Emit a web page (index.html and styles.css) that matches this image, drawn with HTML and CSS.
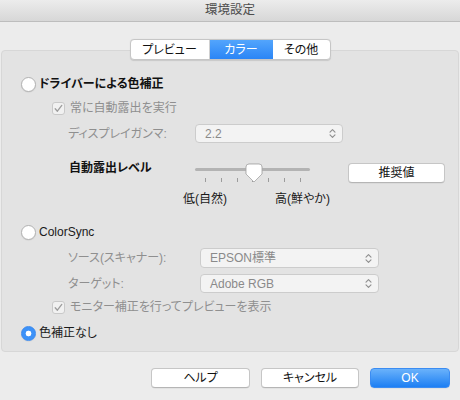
FILE: index.html
```html
<!DOCTYPE html>
<html lang="ja">
<head>
<meta charset="utf-8">
<title>環境設定</title>
<link rel="stylesheet" href="styles.css">
</head>
<body>
<header class="titlebar">環境設定</header>
<main class="content">
  <nav class="tabs">
    <span class="tab tab-preview">プレビュー</span>
    <span class="tab tab-color active">カラー</span>
    <span class="tab tab-other">その他</span>
  </nav>
  <section class="group">
    <div class="row r1">
      <span class="radio"></span><span class="radio-label strong">ドライバーによる色補正</span>
    </div>
    <div class="row r2 check-row">
      <span class="check"><svg viewBox="0 0 13 13" width="13" height="13"><path d="M3.2 6.8 L5.4 9.2 L9.8 3.4" fill="none" stroke="#9d9d9d" stroke-width="1.3" stroke-linecap="round" stroke-linejoin="round"/></svg></span>
      <span class="dim">常に自動露出を実行</span>
    </div>
    <div class="row r3 field-row">
      <span class="field-label dim gamma-label">ディスプレイガンマ:</span>
      <span class="popup gamma-popup"><span>2.2</span><svg class="arrows" viewBox="0 0 7 11" width="7" height="11"><path d="M1 4.2 L3.5 1.6 L6 4.2 M1 6.8 L3.5 9.4 L6 6.8" fill="none" stroke="#8e8e8e" stroke-width="1.1" stroke-linecap="round" stroke-linejoin="round"/></svg></span>
    </div>
    <div class="row r4 slider-row">
      <span class="field-label strong level-label">自動露出レベル</span>
      <div class="slider">
        <span class="track"></span>
        <span class="ticks"><i></i><i></i><i></i><i></i><i></i><i></i><i></i></span>
        <svg class="thumb" viewBox="0 0 18 20" width="18" height="20"><path d="M1 4 A3 3 0 0 1 4 1 H14 A3 3 0 0 1 17 4 V11 L9 19 L1 11 Z" fill="#ffffff" stroke="#b4b4b4" stroke-width="1"/></svg>
      </div>
      <span class="button recommend">推奨値</span>
    </div>
    <div class="row r5 scale-row">
      <span class="scale-low">低(自然)</span><span class="scale-high">高(鮮やか)</span>
    </div>
    <div class="row r6">
      <span class="radio"></span><span class="radio-label">ColorSync</span>
    </div>
    <div class="row r7 field-row">
      <span class="field-label dim sync-label">ソース(スキャナー):</span>
      <span class="popup sync-popup"><span>EPSON標準</span><svg class="arrows" viewBox="0 0 7 11" width="7" height="11"><path d="M1 4.2 L3.5 1.6 L6 4.2 M1 6.8 L3.5 9.4 L6 6.8" fill="none" stroke="#8e8e8e" stroke-width="1.1" stroke-linecap="round" stroke-linejoin="round"/></svg></span>
    </div>
    <div class="row r8 field-row">
      <span class="field-label dim sync-label">ターゲット:</span>
      <span class="popup sync-popup"><span>Adobe RGB</span><svg class="arrows" viewBox="0 0 7 11" width="7" height="11"><path d="M1 4.2 L3.5 1.6 L6 4.2 M1 6.8 L3.5 9.4 L6 6.8" fill="none" stroke="#8e8e8e" stroke-width="1.1" stroke-linecap="round" stroke-linejoin="round"/></svg></span>
    </div>
    <div class="row r9 check-row">
      <span class="check"><svg viewBox="0 0 13 13" width="13" height="13"><path d="M3.2 6.8 L5.4 9.2 L9.8 3.4" fill="none" stroke="#9d9d9d" stroke-width="1.3" stroke-linecap="round" stroke-linejoin="round"/></svg></span>
      <span class="dim">モニター補正を行ってプレビューを表示</span>
    </div>
    <div class="row r10">
      <span class="radio selected"></span><span class="radio-label">色補正なし</span>
    </div>
  </section>
  <footer class="buttons">
    <span class="button help">ヘルプ</span>
    <span class="button cancel">キャンセル</span>
    <span class="button ok">OK</span>
  </footer>
</main>
</body>
</html>
```

FILE: styles.css
```css
* { box-sizing: border-box; }
html, body { margin: 0; padding: 0; }
body {
  width: 460px;
  height: 400px;
  overflow: hidden;
  background: #ececec;
  font-family: "Liberation Sans", "Noto Sans CJK JP", sans-serif;
  font-size: 12px;
  line-height: 16px;
  color: #1a1a1a;
  font-feature-settings: "palt";
}

.titlebar {
  height: 22px;
  border-bottom: 1px solid #bdbdbd;
  background: linear-gradient(#ececec, #d7d7d7);
  text-align: center;
  line-height: 21px;
  font-size: 12.5px;
  color: #4d4d4d;
}

.content { padding: 17px 1px 0; }

.tabs {
  position: relative;
  z-index: 1;
  display: flex;
  width: 201px;
  height: 21px;
  margin: 0 auto;
  background: #ffffff;
  border: 1px solid #c6c6c6;
  border-radius: 4px;
  box-shadow: 0 0.5px 1px rgba(0,0,0,0.12);
  overflow: hidden;
}
.tab {
  display: flex;
  align-items: center;
  justify-content: center;
  height: 19px;
  color: #111;
}
.tab-preview { width: 79px; border-right: 1px solid #d0d0d0; }
.tab-color { width: 63px; }
.tab-other { width: 57px; }
.tab.active {
  background: linear-gradient(#53a5fc, #2a85f6);
  color: #ffffff;
  border-right: none;
}

.group {
  display: flex;
  flex-direction: column;
  margin-top: -10px;
  border: 1px solid #d7d7d7;
  border-radius: 4px;
  background: #e3e3e3;
  padding: 23px 0 8px 19px;
}

.row {
  display: flex;
  align-items: center;
  height: 20px;
}
.r2 { margin-top: 4px; }
.r3 { margin-top: 6px; height: 19px; }
.r4 { margin-top: 20px; height: 19px; align-items: flex-start; }
.r5 { margin-top: 10px; height: 14px; }
.r6 { margin-top: 16px; }
.r7 { margin-top: 6px; }
.r8 { margin-top: 6px; height: 19px; }
.r9 { margin-top: 4px; }
.r10 { margin-top: 6px; }

.strong { font-weight: 700; color: #111; }
.dim { color: #8f8f8f; }

.radio {
  flex: none;
  width: 15px;
  height: 15px;
  border-radius: 50%;
  background: #ffffff;
  border: 1px solid #b2b2b2;
  box-shadow: 0 0.5px 1px rgba(0,0,0,0.1);
}
.radio.selected {
  background: radial-gradient(circle, #ffffff 0, #ffffff 2.6px, #3d92f8 3.2px);
  border-color: #3a89ee;
}
.radio-label { margin-left: 3px; }

.check-row { padding-left: 31px; }
.check {
  flex: none;
  display: flex;
  width: 13px;
  height: 13px;
  margin-right: 5px;
  border: 1px solid #c9c9c9;
  border-radius: 3px;
  background: #f1f1f1;
}
.check svg { margin: -1px; }

.field-row { padding-left: 47px; }
.field-label { flex: none; }
.gamma-label { width: 127px; }
.sync-label { width: 132px; }

.popup {
  flex: none;
  display: flex;
  align-items: center;
  justify-content: space-between;
  height: 100%;
  padding: 0 6px 0 9px;
  border: 1px solid #cccccc;
  border-radius: 4px;
  background: #f3f3f3;
  color: #8a8a8a;
}
.gamma-popup { width: 148px; }
.sync-popup { width: 179px; }

.slider-row { padding-left: 48px; }
.level-label { width: 126px; margin-top: -3px; }
.slider {
  position: relative;
  flex: none;
  width: 115px;
  height: 19px;
  margin-right: 38px;
}
.track {
  position: absolute;
  left: 0;
  right: 0;
  top: 5px;
  height: 3px;
  border-radius: 2px;
  background: #b3b3b3;
}
.ticks {
  position: absolute;
  left: 10px;
  right: 9px;
  top: 15px;
  height: 4px;
  display: flex;
  justify-content: space-between;
}
.ticks i { width: 1px; height: 4px; background: #9c9c9c; }
.thumb {
  position: absolute;
  left: 50px;
  top: -0.5px;
  filter: drop-shadow(0 0.5px 0.6px rgba(0,0,0,0.15));
}

.button {
  flex: none;
  display: flex;
  align-items: center;
  justify-content: center;
  height: 20px;
  border: 1px solid #c6c6c6;
  border-bottom-color: #b5b5b5;
  border-radius: 4px;
  background: #ffffff;
  color: #111;
  box-shadow: 0 0.5px 0.5px rgba(0,0,0,0.08);
}
.recommend { width: 97px; }

.scale-row { padding-left: 162px; }
.scale-low { width: 92px; }

.buttons {
  display: flex;
  justify-content: flex-end;
  gap: 11px;
  margin-top: 16px;
  padding-right: 9px;
}
.help { width: 99px; }
.cancel { width: 98px; }
.ok {
  width: 80px;
  border-color: #3b8cf2;
  background: linear-gradient(#6ab2fb, #1d7ff3);
  color: #ffffff;
}
```
